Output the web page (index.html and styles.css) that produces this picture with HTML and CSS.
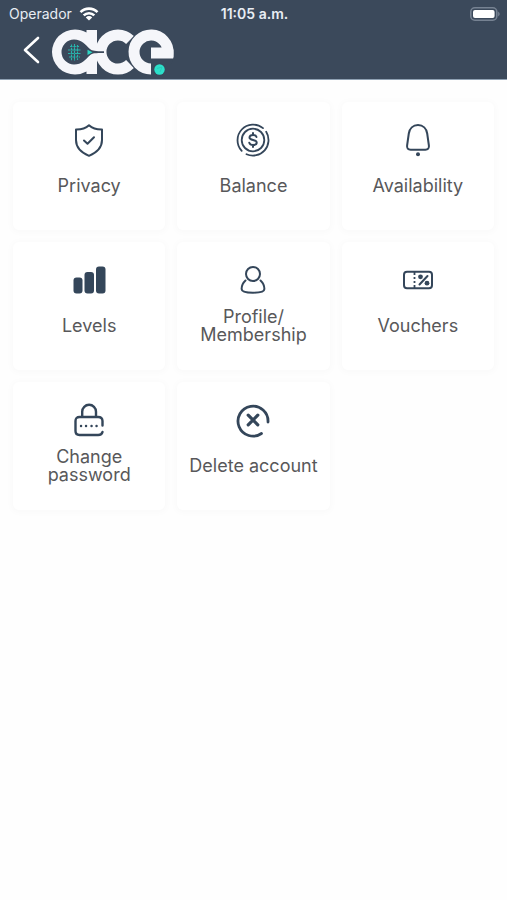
FILE: index.html
```html
<!DOCTYPE html>
<html lang="en">
<head>
<meta charset="utf-8">
<meta name="viewport" content="width=device-width, initial-scale=1">
<title>ace - Settings</title>
<link rel="stylesheet" href="styles.css">
</head>
<body>
<header class="header">
  <div class="status">
    <div class="carrier">
      <span>Operador</span>
      <svg width="20" height="16" viewBox="0 0 20 16" fill="none" stroke="currentColor" stroke-width="2.6"><path d="M1.5 6.2a12 12 0 0 1 17 0M4.7 9.4a7.5 7.5 0 0 1 10.6 0"/><path d="M10 14.6 6.800 11.400a4.600 4.600 0 0 1 6.400 0z" fill="currentColor" stroke="none"/></svg>
    </div>
    <time class="time">11:05 a.m.</time>
    <svg class="battery" width="30" height="14" viewBox="0 0 30 14"><rect x=".8" y=".8" width="26" height="12.4" rx="4" fill="none" stroke="#768292" stroke-width="1.6"/><rect x="3" y="3" width="21.6" height="8" rx="2" fill="#fff"/><path d="M28.300 4.600q2.600 2.400 0 4.800z" fill="#8791a0"/></svg>
  </div>
  <nav class="brand">
    <button class="back" type="button" aria-label="Back"><svg width="18" height="30" viewBox="0 0 18 30" fill="none" stroke="#fff" stroke-width="2.6" stroke-linecap="round" stroke-linejoin="round"><path d="M15 3 2 15l13 12"/></svg></button>
    <svg class="logo" width="124" height="48" viewBox="51 28 124 48" role="img" aria-label="ace">
      <path fill="#f5f6fa" d="M75 29.500c4 0 8 1.200 11.500 3V30H97v44H86.500v-2.500a23 22.500 0 0 1-11.500 3a23 22.500 0 1 1 0-45z"/>
      <path d="M130 40A17 17 0 1 0 130 64" fill="none" stroke="#f5f6fa" stroke-width="11"/>
      <circle cx="151" cy="52" r="23.400" fill="#3b495b"/>
      <path d="M151 53h17A17 17 0 1 0 151 69" fill="none" stroke="#f5f6fa" stroke-width="11"/>
      <path fill="#f5f6fa" d="M151 49.500h22.500v8H151z"/>
      <path fill="#3b495b" d="M74 39.500c8 0 11.500 5.500 16 9.500 2.500 2 5 2.200 14 2.200v1.800c-9 0-11.500.2-14 2.200-4.500 4-8 9.300-16 9.300a12.500 12.500 0 0 1 0-25z"/>
      <path d="M71.500 44.500v16M74.500 44v17M77.500 45v15M70 46.500h9M68 50h12.500M68 53.500h12.500M69 57h11" stroke="#27b3ac" stroke-width="1.100" stroke-dasharray="2.600 .7" fill="none"/>
      <path fill="#2dd7c4" d="m87.500 49.800 5 2.500-5 2.600z"/>
      <circle cx="159.500" cy="69.500" r="6.200" fill="#3b495b"/><circle cx="159.500" cy="69.500" r="5.200" fill="#2ce0ca"/>
      <path d="m157 68.500 5-1.500-2 5" fill="none" stroke="#29c7b6" stroke-width=".8"/>
    </svg>
  </nav>
</header>
<main class="grid">
  <a class="card" href="#privacy">
    <svg class="icon" viewBox="0 0 36 36"><path d="M18 3.200c3 2.800 7.500 4.400 13 4.300v10.500c0 7.500-5.800 12.800-13 15.800C10.800 30.800 5 25.500 5 18V7.500C10.500 7.600 15 6 18 3.200z"/><path d="m13 18.500 3.500 3.300 6.500-6.500"/></svg>
    <span class="label">Privacy</span>
  </a>
  <a class="card" href="#balance">
    <svg class="icon" viewBox="0 0 36 36"><g stroke-width="1.800"><circle cx="18" cy="18" r="11.300"/><path d="M28 6.100A15.600 15.600 0 0 0 6.700 28.800M31.200 9.800A15.600 15.600 0 0 1 11.500 32.200"/><path stroke-width="2" d="M18 11v2M18 23v2M21.500 15c-.5-1.500-1.700-2-3.500-2-2.200 0-3.500.9-3.500 2.500 0 3.400 7.200 1.600 7.200 5 0 1.600-1.500 2.500-3.700 2.500-1.800 0-3.200-.6-3.700-2.200"/></g></svg>
    <span class="label">Balance</span>
  </a>
  <a class="card" href="#availability">
    <svg class="icon" viewBox="0 0 36 36"><path d="M18 3c5 0 8.500 3.500 9.200 8.500l1.700 12c.4 2.700-1 4.300-3.500 4.300H10.600c-2.500 0-3.900-1.600-3.500-4.300l1.700-12C9.500 6.500 13 3 18 3z"/><circle class="solid" cx="18" cy="32.200" r="2"/></svg>
    <span class="label">Availability</span>
  </a>
  <a class="card" href="#levels">
    <svg class="icon" viewBox="0 0 36 36"><g class="solid"><rect x="2.500" y="15.500" width="9" height="16" rx="3"/><rect x="13.500" y="10" width="9.500" height="21.500" rx="3"/><rect x="25" y="4.500" width="9.500" height="27" rx="3"/></g></svg>
    <span class="label">Levels</span>
  </a>
  <a class="card" href="#profile">
    <svg class="icon" viewBox="0 0 36 36"><circle cx="18" cy="12" r="7"/><path d="M10.500 18.500C8 20.800 6.600 24 6.600 27c0 2.700 5 3.700 11.400 3.700S29.400 29.700 29.400 27c0-3-1.400-6.200-3.900-8.500"/></svg>
    <span class="label">Profile/<br>Membership</span>
  </a>
  <a class="card" href="#vouchers">
    <svg class="icon" viewBox="0 0 36 36"><rect x="4" y="9.700" width="28" height="16.600" rx="3"/><path stroke-width="1.800" stroke-linecap="butt" d="M14.500 10v3M14.500 15v2M14.500 19v2M14.500 23v3"/><path d="m19.500 22.500 8-8.500"/><circle class="solid" cx="20.500" cy="14.800" r="2.400"/><circle class="solid" cx="27" cy="21.200" r="2.400"/></svg>
    <span class="label">Vouchers</span>
  </a>
  <a class="card" href="#password">
    <svg class="icon" viewBox="0 0 36 36"><path stroke-width="2.400" d="M11.200 14V9.700a6.900 6.900 0 0 1 13.800 0V14M31.500 23.500V19c0-2.700-1.700-4-4.300-4H8.500c-2.600 0-4 1.300-4 4v10c0 2.700 1.400 4 4 4h18.700c2.300 0 3.800-.9 4.300-3"/><path stroke-width="2.400" d="M10 24h.1M15 24h.1M20.500 24h.1M25.500 24h.1"/></svg>
    <span class="label">Change<br>password</span>
  </a>
  <a class="card" href="#delete">
    <svg class="icon" viewBox="0 0 36 36"><path stroke-width="2.800" d="M33 20A15 15 0 1 0 26.500 31.500"/><path stroke-width="3.200" d="m13.200 13.200 9.600 9.600M22.800 13.200l-9.600 9.600"/></svg>
    <span class="label">Delete account</span>
  </a>
</main>
</body>
</html>
```
FILE: styles.css
```css
* { box-sizing: border-box; }

body {
  margin: 0;
  background: #fefefe;
  color: #58585a;
  font-family: Inter, "Liberation Sans", sans-serif;
}

.header {
  background: #3b495b;
  border-bottom: 1px solid #8fa1b3;
  color: #e8edf3;
}

.status {
  display: grid;
  grid-template-columns: 1fr auto 1fr;
  align-items: center;
  height: 27px;
  padding: 0 7px 0 9px;
  font-size: 14px;
}

.carrier {
  display: flex;
  align-items: center;
  gap: 7px;
}

.carrier svg { color: #fff; }

.time { font-weight: 600; }

.battery { justify-self: end; }

.brand {
  display: flex;
  align-items: flex-start;
  gap: 10px;
  height: 52px;
  padding: 1px 0 0 23px;
}

.back {
  display: flex;
  margin: 0;
  padding: 7px 0;
  border: 0;
  background: none;
}

.logo { display: block; }

.grid {
  display: grid;
  grid-template-columns: repeat(3, 1fr);
  gap: 12px;
  padding: 22px 13px;
}

.card {
  display: flex;
  flex-direction: column;
  align-items: center;
  min-height: 128px;
  padding-top: 20px;
  border-radius: 6px;
  background: #fff;
  box-shadow: 0 1px 6px 2px rgba(0, 0, 0, 0.02);
  color: inherit;
  text-decoration: none;
}

.icon {
  width: 36px;
  height: 36px;
  fill: none;
  stroke: #34465a;
  stroke-width: 2;
  stroke-linecap: round;
  stroke-linejoin: round;
}

.solid {
  fill: #34465a;
  stroke: none;
}

.label {
  display: flex;
  align-items: center;
  min-height: 36px;
  margin-top: 10px;
  font-size: 18px;
  line-height: 18px;
  text-align: center;
}
```
